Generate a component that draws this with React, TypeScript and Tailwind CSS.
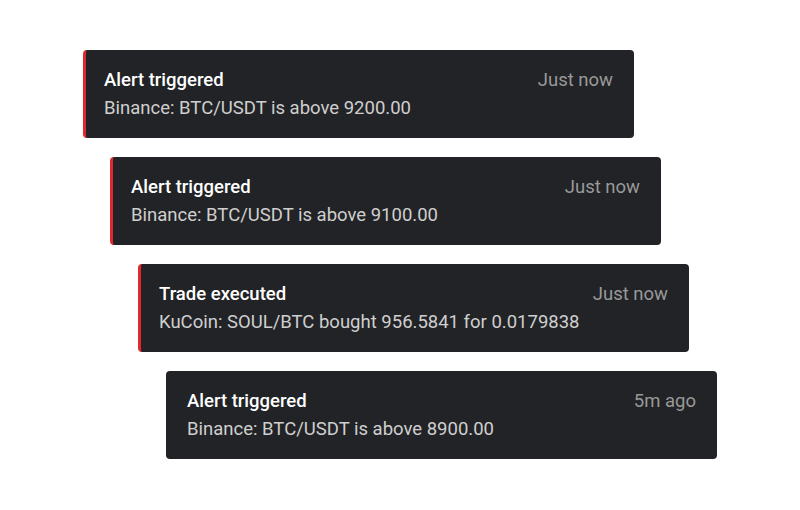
import React from "react";

type Item = { title: string; body: string; time: string; red: boolean; offset: string };

const items: Item[] = [
  { title: "Alert triggered", body: "Binance: BTC/USDT is above 9200.00", time: "Just now", red: true, offset: "ml-0" },
  { title: "Alert triggered", body: "Binance: BTC/USDT is above 9100.00", time: "Just now", red: true, offset: "ml-[27px]" },
  { title: "Trade executed", body: "KuCoin: SOUL/BTC bought 956.5841 for 0.0179838", time: "Just now", red: true, offset: "ml-[55px]" },
  { title: "Alert triggered", body: "Binance: BTC/USDT is above 8900.00", time: "5m ago", red: false, offset: "ml-[83px]" },
];

export default function App() {
  return (
    <div
      className="w-[800px] h-[510px] bg-white pt-[50px] pl-[83px] flex flex-col gap-[19px]"
      style={{ fontFamily: "Roboto, 'Noto Sans', sans-serif" }}
    >
      {items.map((it, i) => (
        <div
          key={i}
          className={`${it.offset} w-[551px] h-[88px] rounded-[4px] bg-[#222326] flex justify-between pr-[21px] pt-[17px] pb-[17px] ${
            it.red ? "border-l-[3px] border-[#e0282e] pl-[18px]" : "pl-[21px]"
          }`}
        >
          <div className="flex flex-col">
            <div className="text-[18.5px] leading-[26px] font-medium text-white">{it.title}</div>
            <div className="text-[18.5px] leading-[26px] mt-[2px] text-[#cfcfcf]">{it.body}</div>
          </div>
          <div className="text-[18.5px] leading-[26px] text-[#999999]">{it.time}</div>
        </div>
      ))}
    </div>
  );
}
